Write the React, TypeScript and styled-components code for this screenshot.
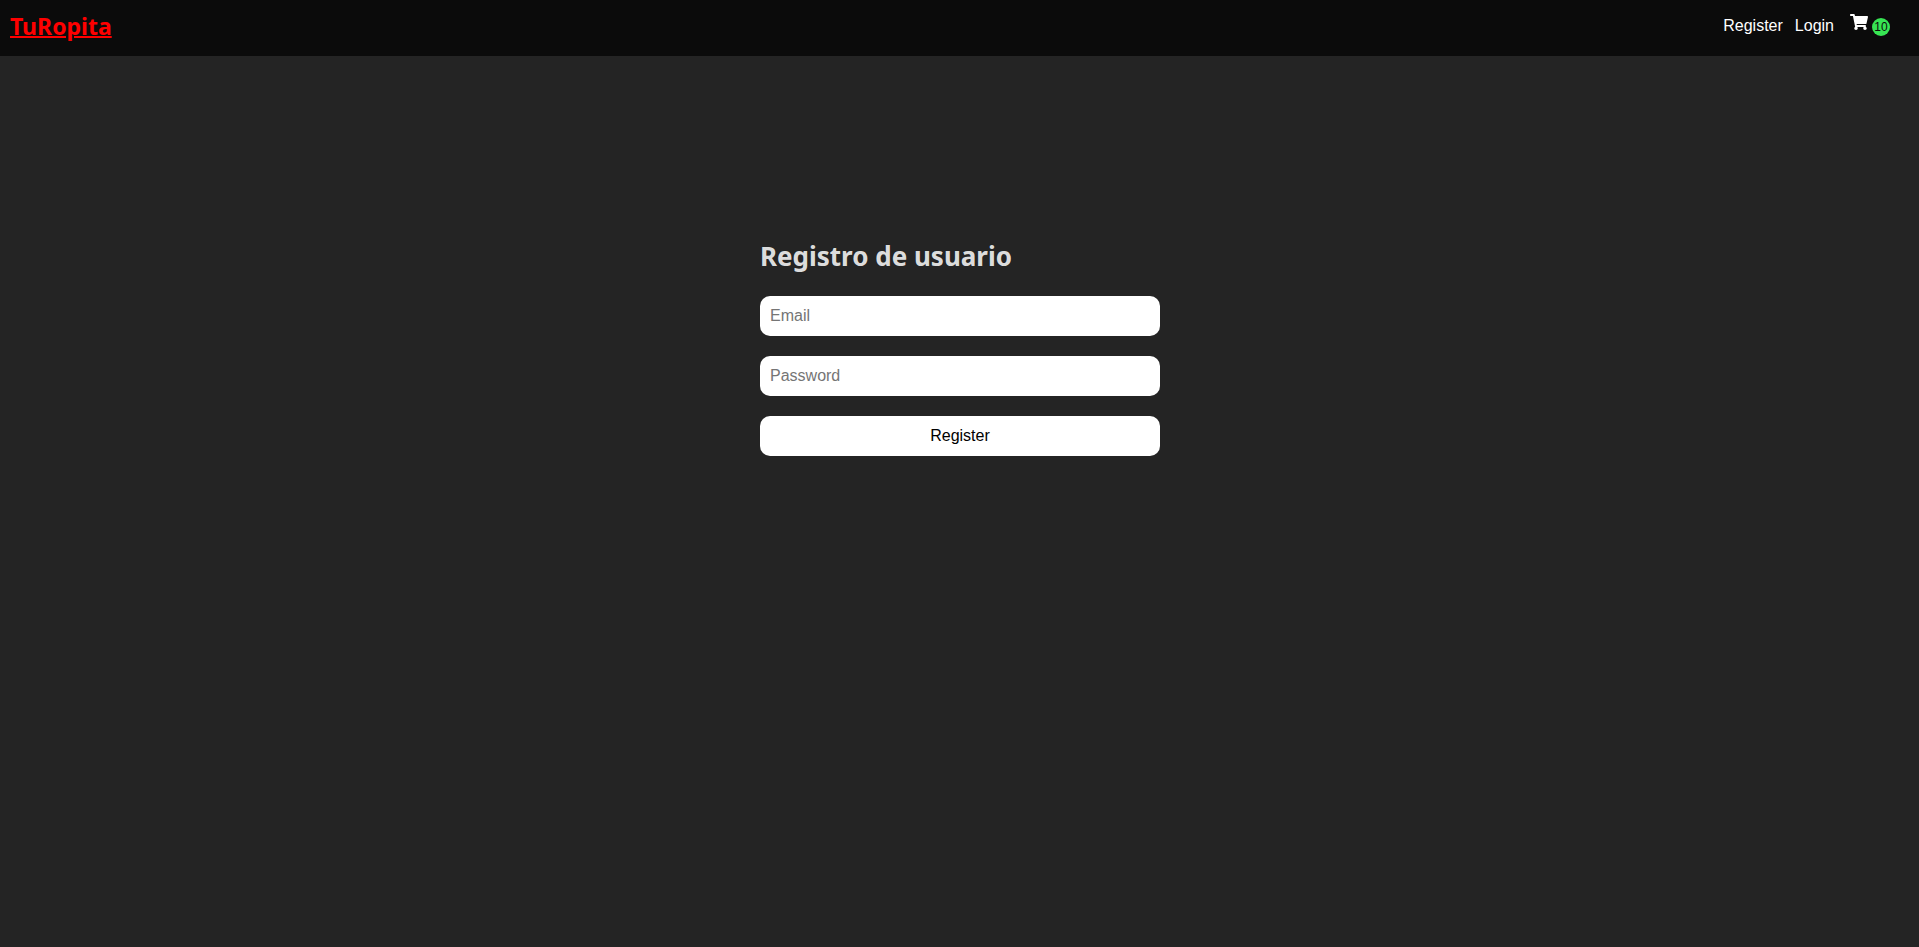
import React from "react";
import styled, { createGlobalStyle } from "styled-components";
import { FaShoppingCart } from "react-icons/fa";

const GlobalStyle = createGlobalStyle`
  *, *::before, *::after { box-sizing: border-box; }
  body {
    margin: 0;
    min-height: 100vh;
    background: #242424;
    color: rgba(255, 255, 255, 0.87);
    font-family: "Segoe UI", "Noto Sans", "Open Sans", sans-serif;
    font-size: 16px;
  }
`;

const Header = styled.header`
  display: flex;
  justify-content: space-between;
  height: 56px;
  padding: 10px;
  background: #0b0b0b;
`;

const Logo = styled.a`
  color: #ff0000;
  font-size: 23px;
  font-weight: 700;
  line-height: 32px;
  text-decoration: underline;
  text-decoration-thickness: 2px;
`;

const Nav = styled.nav`
  display: flex;
  gap: 12px;
  padding-right: 19px;
  font-family: Arial, "Liberation Sans", sans-serif;
  line-height: 32px;
`;

const NavLink = styled.a`
  color: #ffffff;
  text-decoration: none;
`;

const CartLink = styled.a`
  display: flex;
  align-items: flex-start;
  gap: 4px;
  margin-left: 4px;
  padding-top: 4px;
  color: #ffffff;
  text-decoration: none;
`;

const CartIcon = styled(FaShoppingCart)`
  width: 18px;
  height: 16px;
`;

const Badge = styled.span`
  width: 18px;
  height: 18px;
  margin-top: 4px;
  border-radius: 50%;
  background: #37e553;
  color: #0b0b0b;
  font-size: 12px;
  line-height: 18px;
  text-align: center;
`;

const Main = styled.main`
  display: flex;
  justify-content: center;
  padding: 180px 16px 20px 17px;
`;

const Form = styled.form`
  display: flex;
  flex-direction: column;
  gap: 20px;
  width: 100%;
  max-width: 400px;
`;

const Title = styled.h1`
  margin: 0;
  font-size: 26px;
  font-weight: 700;
  line-height: 40px;
`;

const Field = styled.input`
  height: 40px;
  padding: 0 10px;
  border: 0;
  border-radius: 10px;
  background: #ffffff;
  color: #000000;
  font-family: Arial, "Liberation Sans", sans-serif;
  font-size: 16px;

  &::placeholder { color: #757575; }
`;

const SubmitButton = styled.button`
  height: 40px;
  padding: 0 10px;
  border: 0;
  border-radius: 10px;
  background: #ffffff;
  color: #000000;
  font-family: Arial, "Liberation Sans", sans-serif;
  font-size: 16px;
  cursor: pointer;
`;

export default function App() {
  return (
    <>
      <GlobalStyle />
      <Header>
        <Logo href="#home">TuRopita</Logo>
        <Nav>
          <NavLink href="#register">Register</NavLink>
          <NavLink href="#login">Login</NavLink>
          <CartLink href="#cart">
            <CartIcon aria-hidden />
            <Badge>10</Badge>
          </CartLink>
        </Nav>
      </Header>
      <Main>
        <Form onSubmit={(event: React.FormEvent) => event.preventDefault()}>
          <Title>Registro de usuario</Title>
          <Field type="email" name="email" placeholder="Email" aria-label="Email" />
          <Field type="password" name="password" placeholder="Password" aria-label="Password" />
          <SubmitButton type="submit">Register</SubmitButton>
        </Form>
      </Main>
    </>
  );
}
